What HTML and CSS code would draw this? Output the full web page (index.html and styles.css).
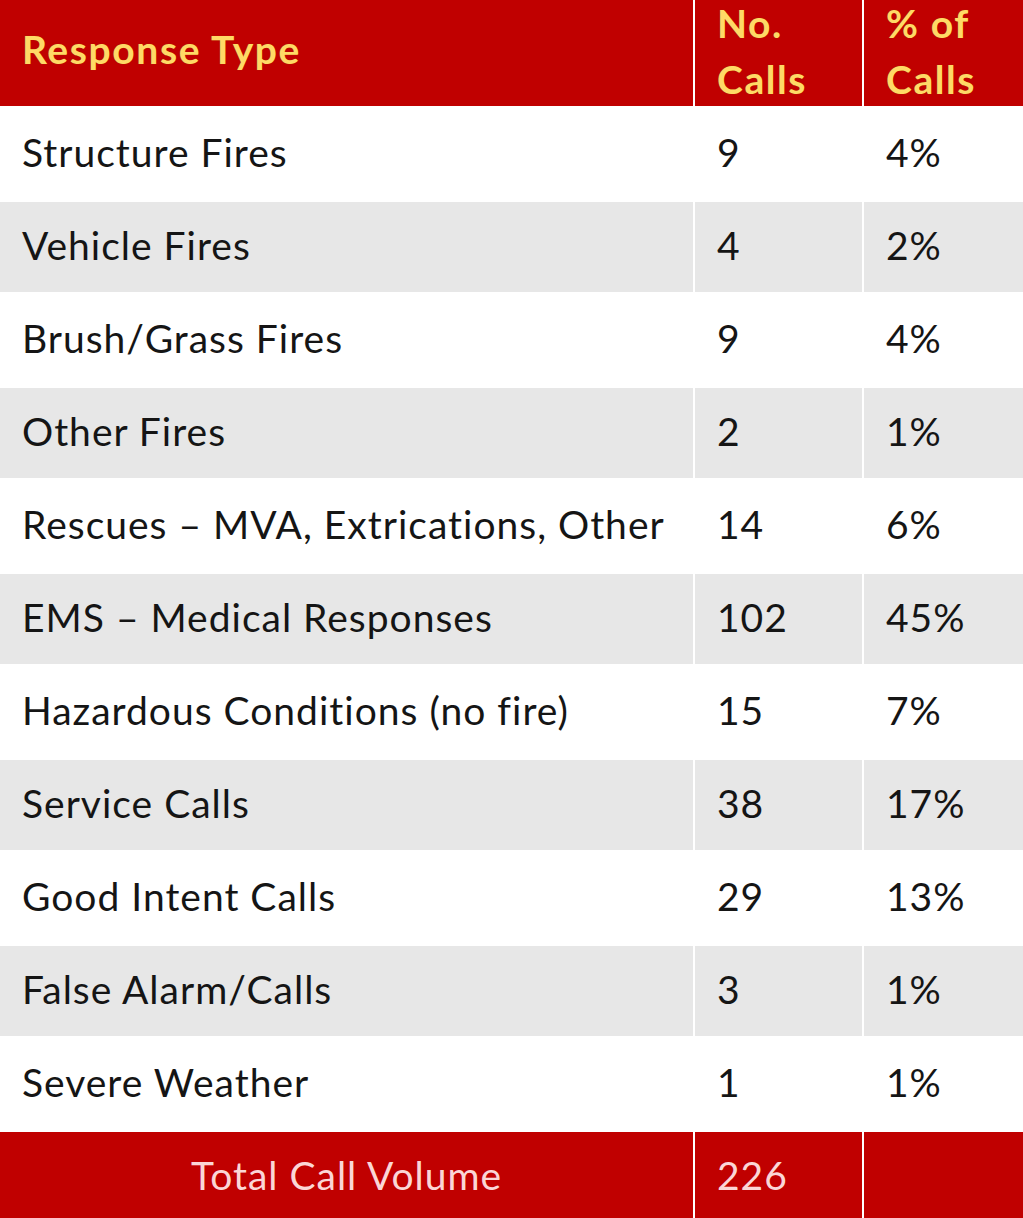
FILE: index.html
```
<!DOCTYPE html>
<html lang="en">
<head>
<meta charset="utf-8">
<title>Response Types</title>
<link rel="stylesheet" href="styles.css">
</head>
<body>
<div class="table">
  <div class="row head">
    <div class="cell">Response Type</div>
    <div class="cell two"><span>No.</span><span>Calls</span></div>
    <div class="cell two"><span>% of</span><span>Calls</span></div>
  </div>
  <div class="row body"><div class="cell">Structure Fires</div><div class="cell">9</div><div class="cell">4%</div></div>
  <div class="row body"><div class="cell">Vehicle Fires</div><div class="cell">4</div><div class="cell">2%</div></div>
  <div class="row body"><div class="cell">Brush/Grass Fires</div><div class="cell">9</div><div class="cell">4%</div></div>
  <div class="row body"><div class="cell">Other Fires</div><div class="cell">2</div><div class="cell">1%</div></div>
  <div class="row body"><div class="cell">Rescues – MVA, Extrications, Other</div><div class="cell">14</div><div class="cell">6%</div></div>
  <div class="row body"><div class="cell">EMS – Medical Responses</div><div class="cell">102</div><div class="cell">45%</div></div>
  <div class="row body"><div class="cell">Hazardous Conditions (no fire)</div><div class="cell">15</div><div class="cell">7%</div></div>
  <div class="row body"><div class="cell">Service Calls</div><div class="cell">38</div><div class="cell">17%</div></div>
  <div class="row body"><div class="cell">Good Intent Calls</div><div class="cell">29</div><div class="cell">13%</div></div>
  <div class="row body"><div class="cell">False Alarm/Calls</div><div class="cell">3</div><div class="cell">1%</div></div>
  <div class="row body"><div class="cell">Severe Weather</div><div class="cell">1</div><div class="cell">1%</div></div>
  <div class="row foot">
    <div class="cell center">Total Call Volume</div>
    <div class="cell">226</div>
    <div class="cell"></div>
  </div>
</div>
</body>
</html>
```
FILE: styles.css
```
html, body {
  margin: 0;
  padding: 0;
  background: #ffffff;
}
body {
  font-family: "Lato", "Open Sans", sans-serif;
  color: #151515;
}
.table {
  width: 1023px;
  display: flex;
  flex-direction: column;
  background: #ffffff;
}
.row {
  display: grid;
  grid-template-columns: 693px 167px 1fr;
  column-gap: 2px;
}
.cell {
  box-sizing: border-box;
  display: flex;
  align-items: center;
  padding-left: 22px;
  font-size: 39px;
  letter-spacing: 1px;
  white-space: nowrap;
}
.head {
  height: 106px;
}
.head .cell {
  height: 106px;
  background: #c00000;
  color: #ffd966;
  font-weight: 700;
  letter-spacing: 1.6px;
  align-items: flex-start;
  padding-top: 26px;
  text-shadow: 0 0 1px #9a3a00;
}
.head .two {
  flex-direction: column;
  justify-content: flex-start;
  gap: 10px;
  padding-top: 0;
}
.body {
  height: 96px;
}
.body .cell {
  background: #ffffff;
  padding-bottom: 4px;
}
.body:nth-child(odd) {
  height: 90px;
}
.body:nth-child(odd) .cell {
  background: #e7e7e7;
}
.foot {
  height: 86px;
}
.foot .cell {
  background: #c00000;
  color: #fbd6d6;
}
.foot .center {
  justify-content: center;
  padding-left: 0;
}
```
